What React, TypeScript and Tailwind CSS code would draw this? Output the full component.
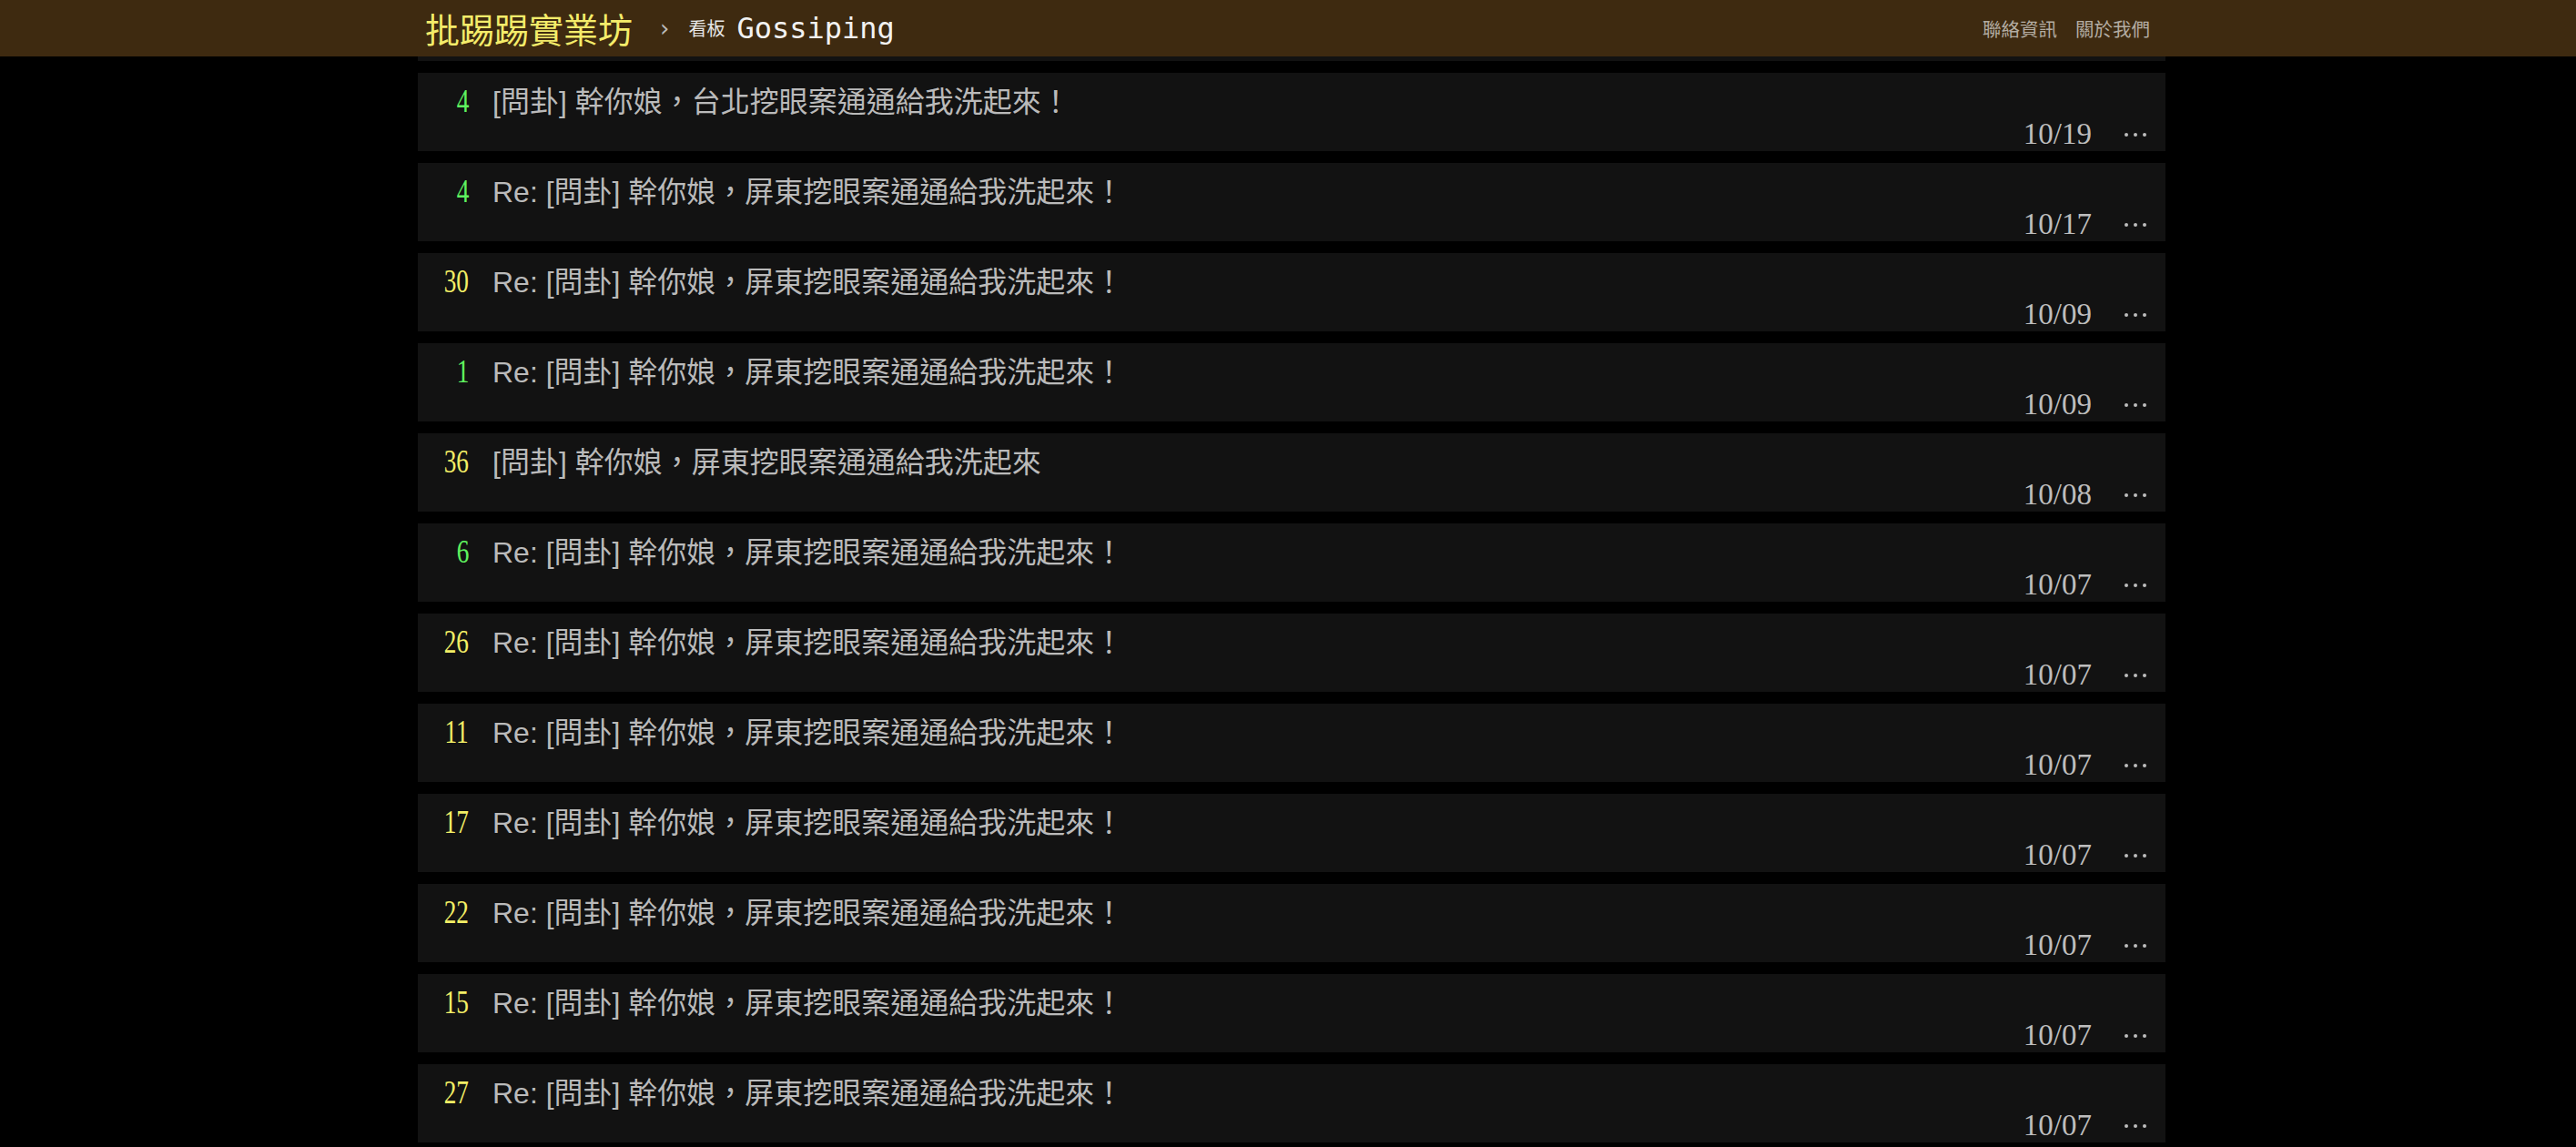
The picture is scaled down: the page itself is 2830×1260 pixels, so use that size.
const posts = [
  { push: "4", hot: false, title: "[問卦] 幹你娘，台北挖眼案通通給我洗起來！", date: "10/19" },
  { push: "4", hot: false, title: "Re: [問卦] 幹你娘，屏東挖眼案通通給我洗起來！", date: "10/17" },
  { push: "30", hot: true, title: "Re: [問卦] 幹你娘，屏東挖眼案通通給我洗起來！", date: "10/09" },
  { push: "1", hot: false, title: "Re: [問卦] 幹你娘，屏東挖眼案通通給我洗起來！", date: "10/09" },
  { push: "36", hot: true, title: "[問卦] 幹你娘，屏東挖眼案通通給我洗起來", date: "10/08" },
  { push: "6", hot: false, title: "Re: [問卦] 幹你娘，屏東挖眼案通通給我洗起來！", date: "10/07" },
  { push: "26", hot: true, title: "Re: [問卦] 幹你娘，屏東挖眼案通通給我洗起來！", date: "10/07" },
  { push: "11", hot: true, title: "Re: [問卦] 幹你娘，屏東挖眼案通通給我洗起來！", date: "10/07" },
  { push: "17", hot: true, title: "Re: [問卦] 幹你娘，屏東挖眼案通通給我洗起來！", date: "10/07" },
  { push: "22", hot: true, title: "Re: [問卦] 幹你娘，屏東挖眼案通通給我洗起來！", date: "10/07" },
  { push: "15", hot: true, title: "Re: [問卦] 幹你娘，屏東挖眼案通通給我洗起來！", date: "10/07" },
  { push: "27", hot: true, title: "Re: [問卦] 幹你娘，屏東挖眼案通通給我洗起來！", date: "10/07" },
];

const sans = "font-['Liberation_Sans','Noto_Sans_CJK_TC',sans-serif]";

const Topbar = () => {
  return (
    <div className="h-[62px] bg-[#3e2a10] pl-2">
      <div className="mx-auto w-[1920px] h-full flex items-center pl-2 pr-[17px]">
        <span className="text-[38px] leading-none text-[#f4ec6a] font-['Noto_Sans_CJK_TC',sans-serif]">
          批踢踢實業坊
        </span>
        <span className="ml-[30px] text-[26px] leading-none text-[#bbbbbb] font-['DejaVu_Sans',sans-serif]">
          ›
        </span>
        <span className="ml-[21px] text-[20px] leading-none text-[#e6e6e6] font-['Noto_Sans_CJK_TC',sans-serif]">
          看板
        </span>
        <span className="ml-[13px] text-[32px] leading-none text-[#f2f2f2] font-['DejaVu_Sans_Mono',monospace]">
          Gossiping
        </span>
        <div className="ml-auto flex gap-[20px] text-[20.5px] leading-none text-[#b3aca2] font-['Noto_Sans_CJK_TC',sans-serif]">
          <span>聯絡資訊</span>
          <span>關於我們</span>
        </div>
      </div>
    </div>
  );
};

const Row = ({ push, hot, title, date }: (typeof posts)[number]) => {
  return (
    <div className="h-[86px] bg-[#121212] flex flex-col justify-between">
      <div className="flex items-baseline pt-[14px]">
        <div
          className={`w-[56px] text-right text-[35px] leading-none font-['Liberation_Serif',serif] ${
            hot ? "text-[#f2ee66]" : "text-[#5ff25f]"
          }`}
        >
          <span className="inline-block scale-x-[0.78] origin-right">{push}</span>
        </div>
        <div className={`ml-[26px] text-[32px] leading-none text-[#bababa] ${sans}`}>{title}</div>
      </div>
      <div className="flex items-center justify-end pr-[21px] pb-[2px]">
        <span className="text-[33px] leading-none text-[#bdbdbd] font-['Liberation_Serif',serif]">{date}</span>
        <div className="ml-[36px] flex gap-[6px]">
          <span className="w-[4px] h-[4px] rounded-full bg-[#bdbdbd]" />
          <span className="w-[4px] h-[4px] rounded-full bg-[#bdbdbd]" />
          <span className="w-[4px] h-[4px] rounded-full bg-[#bdbdbd]" />
        </div>
      </div>
    </div>
  );
};

export default function App() {
  return (
    <div className="h-[1260px] overflow-hidden bg-black">
      <Topbar />
      <div className="pl-2">
        <div className="mx-auto w-[1920px] flex flex-col gap-[13px]">
          <div className="h-[5px] bg-[#121212]" />
          {posts.map((p, i) => (
            <Row key={i} {...p} />
          ))}
        </div>
      </div>
    </div>
  );
}
